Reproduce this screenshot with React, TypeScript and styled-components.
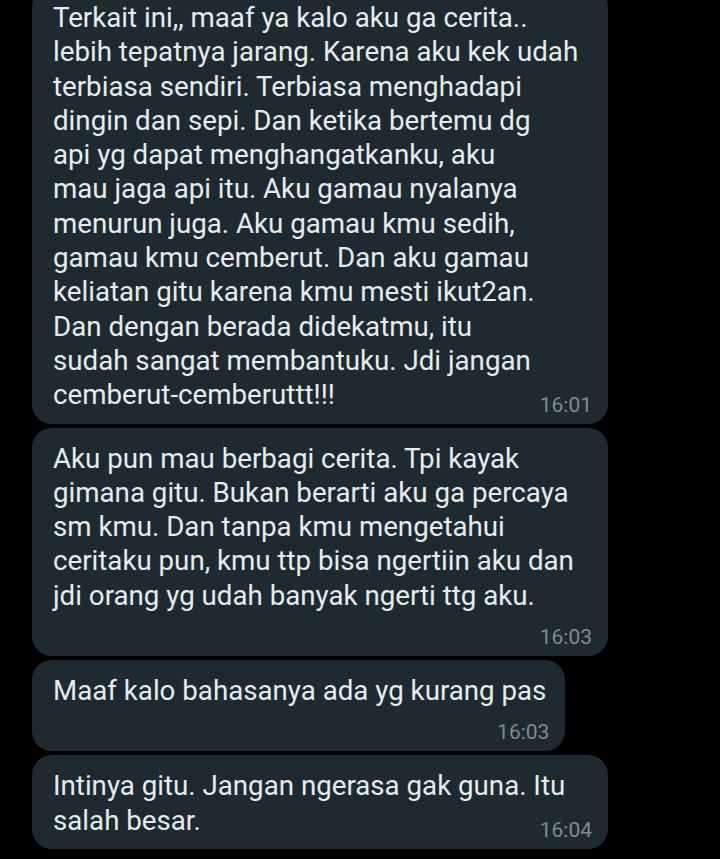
import React from "react";
import styled, { createGlobalStyle } from "styled-components";

const GlobalStyle = createGlobalStyle`
  html, body {
    margin: 0;
    padding: 0;
    background: #000000;
  }
  body {
    font-family: Roboto, "Noto Sans", "Liberation Sans", sans-serif;
    -webkit-font-smoothing: antialiased;
  }
`;

const Screen = styled.div`
  width: 720px;
  height: 859px;
  overflow: hidden;
  background: #000000;
`;

const Thread = styled.div`
  display: flex;
  flex-direction: column;
  align-items: flex-start;
  gap: 4px;
  margin-top: -13px;
  padding-left: 32px;
`;

const Bubble = styled.div<{ $wide?: boolean }>`
  box-sizing: border-box;
  width: ${(p) => (p.$wide ? "576px" : "auto")};
  background: #1e2a30;
  border-radius: 20px;
  padding: 14px 16px 7px 21px;
  display: flex;
  flex-direction: column;
`;

const Text = styled.div`
  color: #e7ebed;
  font-family: Roboto, "Noto Sans", "Liberation Sans", sans-serif;
  font-size: 27.7px;
  line-height: 34.3px;
  padding-right: 3px;
`;

const Line = styled.span`
  display: block;
  white-space: nowrap;
`;

const Meta = styled.div<{ $overlap?: boolean }>`
  display: flex;
  justify-content: flex-end;
  align-items: center;
  height: 24px;
  margin-top: ${(p) => (p.$overlap ? "-20px" : "12px")};
  color: #7f8b91;
  font-family: Roboto, "Noto Sans", "Liberation Sans", sans-serif;
  font-size: 21px;
`;

type Msg = { lines: string[]; time: string; wide?: boolean; overlap?: boolean };

const messages: Msg[] = [
  {
    lines: [
      "Terkait ini,, maaf ya kalo aku ga cerita..",
      "lebih tepatnya jarang. Karena aku kek udah",
      "terbiasa sendiri. Terbiasa menghadapi",
      "dingin dan sepi. Dan ketika bertemu dg",
      "api yg dapat menghangatkanku, aku",
      "mau jaga api itu. Aku gamau nyalanya",
      "menurun juga. Aku gamau kmu sedih,",
      "gamau kmu cemberut. Dan aku gamau",
      "keliatan gitu karena kmu mesti ikut2an.",
      "Dan dengan berada didekatmu, itu",
      "sudah sangat membantuku. Jdi jangan",
      "cemberut-cemberuttt!!!",
    ],
    time: "16:01",
    wide: true,
    overlap: true,
  },
  {
    lines: [
      "Aku pun mau berbagi cerita. Tpi kayak",
      "gimana gitu. Bukan berarti aku ga percaya",
      "sm kmu. Dan tanpa kmu mengetahui",
      "ceritaku pun, kmu ttp bisa ngertiin aku dan",
      "jdi orang yg udah banyak ngerti ttg aku.",
    ],
    time: "16:03",
    wide: true,
  },
  {
    lines: ["Maaf kalo bahasanya ada yg kurang pas"],
    time: "16:03",
  },
  {
    lines: ["Intinya gitu. Jangan ngerasa gak guna. Itu", "salah besar."],
    time: "16:04",
    wide: true,
    overlap: true,
  },
];

export default function App() {
  return (
    <Screen>
      <GlobalStyle />
      <Thread>
        {messages.map((m, i) => (
          <Bubble key={i} $wide={m.wide}>
            <Text>
              {m.lines.map((l, j) => (
                <Line key={j}>{l}</Line>
              ))}
            </Text>
            <Meta $overlap={m.overlap}>{m.time}</Meta>
          </Bubble>
        ))}
      </Thread>
    </Screen>
  );
}
